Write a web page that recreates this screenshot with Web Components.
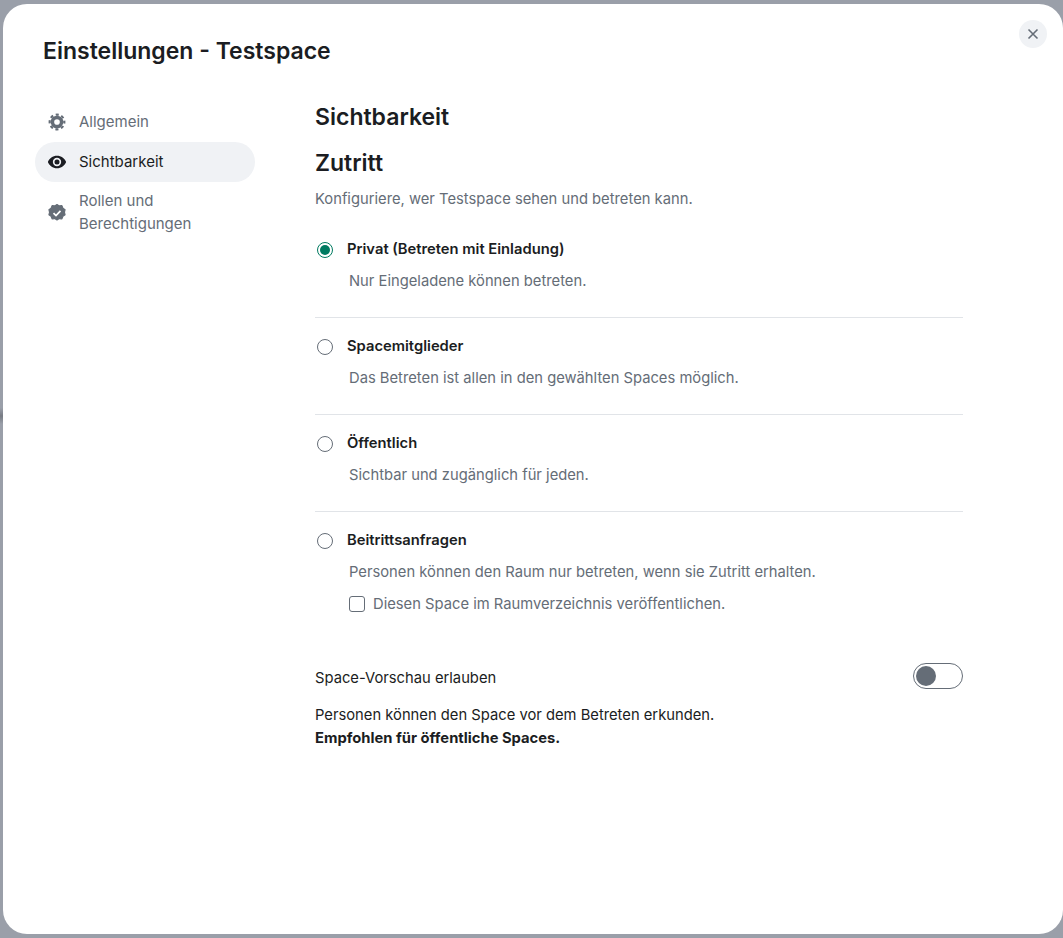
<!DOCTYPE html>
<html lang="de">
<head>
<meta charset="utf-8">
<title>Einstellungen - Testspace</title>
<style>
  html, body { margin: 0; height: 100%; }
  body {
    background: #9a9fa9 linear-gradient(transparent, #777b84, transparent) 0 408px / 3px 16px no-repeat;
    font-family: Inter, "Liberation Sans", sans-serif;
    color: #1b1d22;
    overflow: hidden;
  }
</style>
</head>
<body>
<settings-dialog heading="Einstellungen - Testspace">
  <nav-item slot="nav" icon="gear">Allgemein</nav-item>
  <nav-item slot="nav" icon="eye" active>Sichtbarkeit</nav-item>
  <nav-item slot="nav" icon="badge">Rollen und<br>Berechtigungen</nav-item>

  <section-head>Sichtbarkeit</section-head>
  <access-intro title="Zutritt">Konfiguriere, wer Testspace sehen und betreten kann.</access-intro>

  <radio-option label="Privat (Betreten mit Einladung)" checked>Nur Eingeladene können betreten.</radio-option>
  <radio-option label="Spacemitglieder">Das Betreten ist allen in den gewählten Spaces möglich.</radio-option>
  <radio-option label="Öffentlich">Sichtbar und zugänglich für jeden.</radio-option>
  <radio-option label="Beitrittsanfragen" last>
    Personen können den Raum nur betreten, wenn sie Zutritt erhalten.
    <check-option slot="extra">Diesen Space im Raumverzeichnis veröffentlichen.</check-option>
  </radio-option>

  <toggle-row label="Space-Vorschau erlauben">
    Personen können den Space vor dem Betreten erkunden.<br><b>Empfohlen für öffentliche Spaces.</b>
  </toggle-row>
</settings-dialog>

<script>
class SettingsDialog extends HTMLElement {
  connectedCallback() {
    const heading = this.getAttribute("heading") || "";
    this.attachShadow({ mode: "open" });
    this.shadowRoot.innerHTML = `
      <style>
        :host {
          display: block;
          box-sizing: border-box;
          height: 930px;
          margin: 4px 0 0 3px;
          background: #fff;
          border-radius: 24px;
          position: relative;
          overflow: hidden;
        }
        h1 {
          margin: 0;
          padding: 33px 0 0 40px;
          font-size: 23px;
          line-height: 29px;
          font-weight: 600;
        }
        .columns {
          display: grid;
          grid-template-columns: 220px 648px;
          column-gap: 60px;
          padding: 36px 0 0 32px;
        }
        .side { display: flex; flex-direction: column; }
        .close {
          position: absolute;
          top: 16px;
          right: 16px;
          width: 28px;
          height: 28px;
          border-radius: 50%;
          background: #f0f2f5;
          display: flex;
          align-items: center;
          justify-content: center;
        }
      </style>
      <h1>${heading}</h1>
      <div class="close">
        <svg width="14" height="14" viewBox="0 0 14 14" fill="none" stroke="#656d77" stroke-width="1.6">
          <path d="M2.5 2.5l9 9M11.5 2.5l-9 9"/>
        </svg>
      </div>
      <div class="columns">
        <div class="side"><slot name="nav"></slot></div>
        <div class="main"><slot></slot></div>
      </div>
    `;
  }
}
customElements.define("settings-dialog", SettingsDialog);

const NAV_ICONS = {
  // teeth are a dashed ring round the solid gear body
  gear: `<svg viewBox="0 0 24 24"><path fill-rule="evenodd" d="M12 4.4a7.6 7.6 0 1 1 0 15.2 7.6 7.6 0 0 1 0-15.2zm0 4.2a3.4 3.4 0 1 0 0 6.8 3.4 3.4 0 0 0 0-6.8z"/><circle cx="12" cy="12" r="8.8" fill="none" stroke="currentColor" stroke-width="2.6" stroke-dasharray="3.7 3.21" stroke-dashoffset="1.85"/></svg>`,
  eye: `<svg viewBox="0 0 24 24"><path fill-rule="evenodd" d="M12 4.5C7 4.5 2.73 7.61 1 12c1.73 4.39 6 7.5 11 7.5s9.27-3.11 11-7.5c-1.73-4.39-6-7.5-11-7.5zM12 17a5 5 0 1 1 0-10 5 5 0 0 1 0 10zm0-8a3 3 0 1 0 0 6 3 3 0 0 0 0-6z"/></svg>`,
  badge: `<svg viewBox="0 0 24 24"><path d="M12 1.8l2.7 1.7 3.2-.3 1.2 3 2.6 1.8-.8 3.1.8 3.1-2.6 1.8-1.2 3-3.2-.3-2.7 1.7-2.7-1.7-3.2.3-1.2-3-2.6-1.8.8-3.1-.8-3.1 2.6-1.8 1.2-3 3.2.3z" stroke="currentColor" stroke-width="1.4" stroke-linejoin="round"/><path d="M7.8 12.2l3 2.9 5.4-5.6" fill="none" stroke="#fff" stroke-width="2.1"/></svg>`
};

class NavItem extends HTMLElement {
  connectedCallback() {
    const icon = NAV_ICONS[this.getAttribute("icon")] || "";
    this.attachShadow({ mode: "open" });
    this.shadowRoot.innerHTML = `
      <style>
        :host {
          display: flex;
          align-items: center;
          gap: 12px;
          min-height: 40px;
          padding: 0 12px;
          border-radius: 20px;
          font-size: 15px;
          line-height: 23px;
          color: #656d77;
        }
        :host([active]) { background: #f0f2f5; color: #1b1d22; }
        svg { display: block; width: 20px; height: 20px; flex: none; fill: currentColor; }
        div { padding: 7px 0 9px; }
      </style>
      ${icon}
      <div><slot></slot></div>
    `;
  }
}
customElements.define("nav-item", NavItem);

class SectionHead extends HTMLElement {
  connectedCallback() {
    this.attachShadow({ mode: "open" });
    this.shadowRoot.innerHTML = `
      <style>
        :host {
          display: block;
          font-size: 23px;
          line-height: 29px;
          font-weight: 600;
          margin-top: 1px;
        }
      </style>
      <slot></slot>
    `;
  }
}
customElements.define("section-head", SectionHead);

class AccessIntro extends HTMLElement {
  connectedCallback() {
    const title = this.getAttribute("title") || "";
    this.removeAttribute("title");
    this.attachShadow({ mode: "open" });
    this.shadowRoot.innerHTML = `
      <style>
        :host { display: block; margin: 17px 0 12px; }
        h3 { margin: 0; font-size: 23px; line-height: 29px; font-weight: 600; }
        p { margin: 11px 0 0; font-size: 14.75px; line-height: 20px; color: #656d77; }
      </style>
      <h3>${title}</h3>
      <p><slot></slot></p>
    `;
  }
}
customElements.define("access-intro", AccessIntro);

class RadioOption extends HTMLElement {
  connectedCallback() {
    const label = this.getAttribute("label") || "";
    const checked = this.hasAttribute("checked");
    this.attachShadow({ mode: "open" });
    this.shadowRoot.innerHTML = `
      <style>
        :host {
          display: block;
          box-sizing: border-box;
          height: 97px;
          padding-top: 20px;
          border-bottom: 1px solid #e1e4e8;
        }
        :host([last]) { border-bottom: 0; height: auto; }
        .top { display: flex; align-items: center; gap: 14px; padding-left: 2px; }
        .dot {
          box-sizing: border-box;
          width: 16px;
          height: 16px;
          border: 1px solid #656d77;
          border-radius: 50%;
          flex: none;
          display: flex;
          align-items: center;
          justify-content: center;
        }
        .dot.on { border-color: #007a61; }
        .dot.on::after {
          content: "";
          width: 10px;
          height: 10px;
          border-radius: 50%;
          background: #007a61;
        }
        .label { font-size: 14.75px; line-height: 20px; font-weight: 600; margin-top: -2px; }
        .desc {
          margin: 12px 0 0 34px;
          font-size: 14.75px;
          line-height: 20px;
          color: #656d77;
        }
      </style>
      <div class="top">
        <span class="dot ${checked ? "on" : ""}"></span>
        <span class="label">${label}</span>
      </div>
      <div class="desc"><slot></slot></div>
      <slot name="extra"></slot>
    `;
  }
}
customElements.define("radio-option", RadioOption);

class CheckOption extends HTMLElement {
  connectedCallback() {
    this.attachShadow({ mode: "open" });
    this.shadowRoot.innerHTML = `
      <style>
        :host {
          display: flex;
          align-items: center;
          gap: 8px;
          margin: 12px 0 0 34px;
          font-size: 14.75px;
          line-height: 20px;
          color: #656d77;
        }
        span {
          width: 14px;
          height: 14px;
          border: 1px solid #656d77;
          border-radius: 3px;
          flex: none;
        }
      </style>
      <span></span>
      <div><slot></slot></div>
    `;
  }
}
customElements.define("check-option", CheckOption);

class ToggleRow extends HTMLElement {
  connectedCallback() {
    const label = this.getAttribute("label") || "";
    this.attachShadow({ mode: "open" });
    this.shadowRoot.innerHTML = `
      <style>
        :host { display: block; margin-top: 49px; font-size: 14.75px; }
        .row {
          display: flex;
          align-items: center;
          justify-content: space-between;
          height: 26px;
        }
        .row span:first-child { line-height: 26px; margin-top: 4px; }
        .switch {
          box-sizing: border-box;
          width: 50px;
          height: 26px;
          border: 1px solid #656d77;
          border-radius: 13px;
          padding: 2px;
        }
        .switch::before {
          content: "";
          display: block;
          width: 20px;
          height: 20px;
          border-radius: 50%;
          background: #656d77;
        }
        .note { margin-top: 15px; line-height: 23px; }
      </style>
      <div class="row"><span>${label}</span><span class="switch"></span></div>
      <div class="note"><slot></slot></div>
    `;
  }
}
customElements.define("toggle-row", ToggleRow);
</script>
</body>
</html>
